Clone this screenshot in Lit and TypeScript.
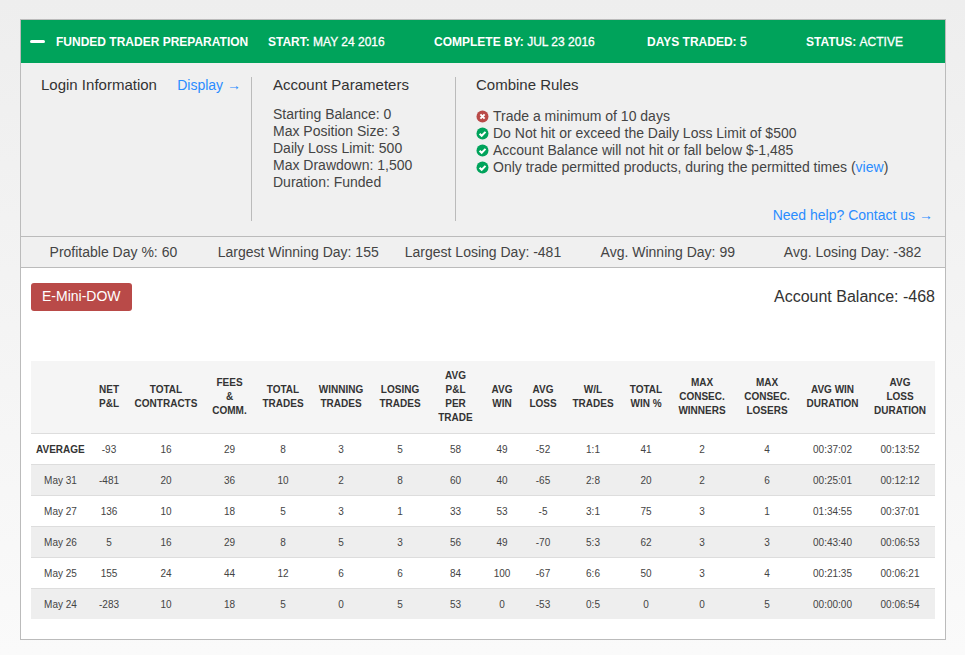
import { LitElement, html, css, svg } from "lit";
import { customElement } from "lit/decorators.js";

const COLS = [59, 38, 76, 51, 56, 60, 58, 53, 40, 42, 58, 48, 64, 66, 65, 70];
const HEAD = [
  [], ["NET", "P&L"], ["TOTAL", "CONTRACTS"], ["FEES", "&", "COMM."], ["TOTAL", "TRADES"],
  ["WINNING", "TRADES"], ["LOSING", "TRADES"], ["AVG", "P&L", "PER", "TRADE"], ["AVG", "WIN"],
  ["AVG", "LOSS"], ["W/L", "TRADES"], ["TOTAL", "WIN %"], ["MAX", "CONSEC.", "WINNERS"],
  ["MAX", "CONSEC.", "LOSERS"], ["AVG WIN", "DURATION"], ["AVG", "LOSS", "DURATION"],
];
const ROWS = [
  ["AVERAGE", "-93", "16", "29", "8", "3", "5", "58", "49", "-52", "1:1", "41", "2", "4", "00:37:02", "00:13:52"],
  ["May 31", "-481", "20", "36", "10", "2", "8", "60", "40", "-65", "2:8", "20", "2", "6", "00:25:01", "00:12:12"],
  ["May 27", "136", "10", "18", "5", "3", "1", "33", "53", "-5", "3:1", "75", "3", "1", "01:34:55", "00:37:01"],
  ["May 26", "5", "16", "29", "8", "5", "3", "56", "49", "-70", "5:3", "62", "3", "3", "00:43:40", "00:06:53"],
  ["May 25", "155", "24", "44", "12", "6", "6", "84", "100", "-67", "6:6", "50", "3", "4", "00:21:35", "00:06:21"],
  ["May 24", "-283", "10", "18", "5", "0", "5", "53", "0", "-53", "0:5", "0", "0", "5", "00:00:00", "00:06:54"],
];
const STATS = [
  "Profitable Day %: 60", "Largest Winning Day: 155", "Largest Losing Day: -481",
  "Avg. Winning Day: 99", "Avg. Losing Day: -382",
];
const PARAMS = [
  "Starting Balance: 0", "Max Position Size: 3", "Daily Loss Limit: 500",
  "Max Drawdown: 1,500", "Duration: Funded",
];

const okIcon = svg`<circle cx="6.5" cy="6.5" r="6" fill="#00a35b"/><path d="M3.6 6.7l2.1 2.1 3.8-3.9" fill="none" stroke="#fff" stroke-width="2"/>`;
const badIcon = svg`<circle cx="6.5" cy="6.5" r="6" fill="#b94a48"/><path d="M4.4 4.4l4.2 4.2M8.6 4.4l-4.2 4.2" fill="none" stroke="#fff" stroke-width="2"/>`;

@customElement("app-root")
export class AppRoot extends LitElement {
  static styles = css`
    :host {
      display: block;
      min-height: 655px;
      box-sizing: border-box;
      padding: 19px 19px 14px 20px;
      background: linear-gradient(#eeeeee, #fafafa);
      font-family: "Liberation Sans", Arial, sans-serif;
      color: #333;
    }
    .panel { border: 1px solid #bbb; background: #fff; }
    .bar {
      display: flex;
      align-items: center;
      height: 43px;
      background: #00a35b;
      color: #fff;
      font-size: 12px;
      font-weight: bold;
      text-transform: uppercase;
    }
    .minus { width: 15px; height: 3px; border-radius: 2px; background: #fff; margin: 0 11px 0 9px; }
    .bar span { flex: none; white-space: nowrap; }
    .b0 { width: 212px; }
    .b1 { width: 166px; }
    .b2 { width: 213px; }
    .b3 { width: 159px; }
    .bar em { font-style: normal; font-weight: normal; -webkit-text-stroke: 0.3px #fff; }
    .info {
      display: flex;
      height: 174px;
      box-sizing: border-box;
      padding: 14px 0 15px;
      background: #f0f0f0;
      border-bottom: 1px solid #bbb;
    }
    .login, .params { box-sizing: border-box; border-right: 1px solid #bbb; }
    .login { width: 231px; padding: 0 10px 0 20px; display: flex; justify-content: space-between; }
    .params { width: 204px; padding-left: 21px; }
    .rules { flex: 1; padding: 0 12px 0 20px; display: flex; flex-direction: column; }
    h3 { margin: 0; font-size: 15px; line-height: 18px; font-weight: normal; color: #333; height: 18px; margin-top: -1px; }
    a { color: #2a8cff; text-decoration: none; font-size: 14px; }
    .lines { margin-top: 12px; font-size: 14px; line-height: 17px; color: #444; }
    .rule { display: flex; align-items: center; gap: 4px; height: 17px; }
    .rule svg { width: 13px; height: 13px; flex: none; }
    .rules .lines { margin-top: 14px; }
    .help { margin-top: auto; text-align: right; line-height: 17px; margin-bottom: -3px; }
    .stats {
      display: grid;
      grid-template-columns: repeat(5, 1fr);
      height: 31px;
      box-sizing: border-box;
      align-items: center;
      text-align: center;
      background: #f0f0f0;
      border-bottom: 1px solid #bbb;
      font-size: 14px;
      color: #444;
    }
    .main { padding: 15px 10px 20px; }
    .top { display: flex; justify-content: space-between; align-items: center; height: 28px; margin-bottom: 50px; }
    .btn {
      display: block;
      height: 28px;
      line-height: 27px;
      padding: 0 11px;
      background: #b94a48;
      color: #fff;
      font-size: 14px;
      border-radius: 3px;
    }
    .bal { font-size: 16px; color: #333; }
    table { border-collapse: collapse; table-layout: fixed; width: 904px; }
    th {
      height: 72px;
      padding: 0;
      background: #f5f5f5;
      font-size: 10px;
      line-height: 14px;
      font-weight: bold;
      color: #333;
      text-align: center;
      vertical-align: middle;
    }
    th div { white-space: nowrap; }
    td {
      height: 30px;
      padding: 0;
      border-top: 1px solid #ddd;
      font-size: 10px;
      text-align: center;
      color: #444;
      white-space: nowrap;
    }
    tbody tr:nth-child(even) td { background: #eee; }
    .avg td:first-child { font-weight: bold; color: #333; text-align: left; padding-left: 5px; }
  `;

  render() {
    return html`<div class="panel">
      <div class="bar">
        <div class="minus"></div>
        <span class="b0">Funded Trader Preparation</span>
        <span class="b1">Start: <em>May 24 2016</em></span>
        <span class="b2">Complete By: <em>Jul 23 2016</em></span>
        <span class="b3">Days Traded: <em>5</em></span>
        <span>Status: <em>Active</em></span>
      </div>
      <div class="info">
        <div class="login"><h3>Login Information</h3><a>Display →</a></div>
        <div class="params">
          <h3>Account Parameters</h3>
          <div class="lines">${PARAMS.map((p) => html`<div>${p}</div>`)}</div>
        </div>
        <div class="rules">
          <h3>Combine Rules</h3>
          <div class="lines">
            <div class="rule"><svg viewBox="0 0 13 13">${badIcon}</svg><span>Trade a minimum of 10 days</span></div>
            <div class="rule"><svg viewBox="0 0 13 13">${okIcon}</svg><span>Do Not hit or exceed the Daily Loss Limit of $500</span></div>
            <div class="rule"><svg viewBox="0 0 13 13">${okIcon}</svg><span>Account Balance will not hit or fall below $-1,485</span></div>
            <div class="rule"><svg viewBox="0 0 13 13">${okIcon}</svg><span>Only trade permitted products, during the permitted times (<a>view</a>)</span></div>
          </div>
          <div class="help"><a>Need help? Contact us →</a></div>
        </div>
      </div>
      <div class="stats">${STATS.map((s) => html`<div>${s}</div>`)}</div>
      <div class="main">
        <div class="top">
          <div class="btn">E-Mini-DOW</div>
          <div class="bal">Account Balance: -468</div>
        </div>
        <table>
          <colgroup>${COLS.map((w) => html`<col style="width:${w}px" />`)}</colgroup>
          <thead><tr>${HEAD.map((h) => html`<th>${h.map((l) => html`<div>${l}</div>`)}</th>`)}</tr></thead>
          <tbody>
            ${ROWS.map((r, i) => html`<tr class=${i === 0 ? "avg" : ""}>${r.map((c) => html`<td>${c}</td>`)}</tr>`)}
          </tbody>
        </table>
      </div>
    </div>`;
  }
}
